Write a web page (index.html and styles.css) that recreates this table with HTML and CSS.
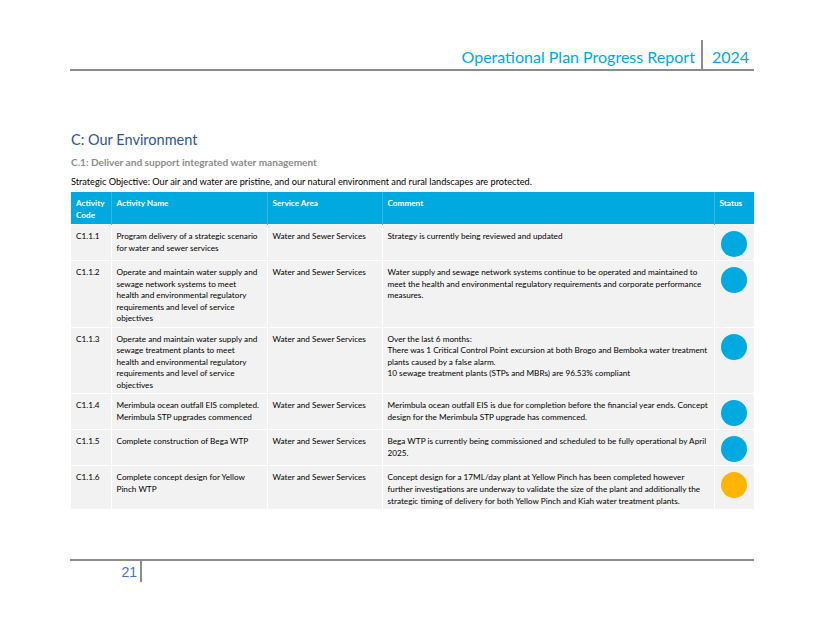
FILE: index.html
```html
<!DOCTYPE html>
<html lang="en">
<head>
<meta charset="utf-8">
<title>Operational Plan Progress Report 2024</title>
<link rel="stylesheet" href="styles.css">
</head>
<body>
<div class="page">
  <header class="top">
    <span class="top-title">Operational Plan Progress Report</span>
    <span class="top-year">2024</span>
  </header>

  <main class="content">
    <h1 class="section">C: Our Environment</h1>
    <h2 class="sub">C.1: Deliver and support integrated water management</h2>
    <p class="objective">Strategic Objective: Our air and water are pristine, and our natural environment and rural landscapes are protected.</p>

    <table class="plan">
      <colgroup>
        <col class="c-code"><col class="c-name"><col class="c-area"><col class="c-comment"><col class="c-status">
      </colgroup>
      <thead>
        <tr>
          <th>Activity Code</th>
          <th>Activity Name</th>
          <th>Service Area</th>
          <th>Comment</th>
          <th>Status</th>
        </tr>
      </thead>
      <tbody>
        <tr>
          <td>C1.1.1</td>
          <td class="name">Program delivery of a strategic scenario for water and sewer services</td>
          <td>Water and Sewer Services</td>
          <td>Strategy is currently being reviewed and updated</td>
          <td class="st"><span class="dot blue"></span></td>
        </tr>
        <tr>
          <td>C1.1.2</td>
          <td class="name">Operate and maintain water supply and sewage network systems to meet health and environmental regulatory requirements and level of service objectives</td>
          <td>Water and Sewer Services</td>
          <td>Water supply and sewage network systems continue to be operated and maintained to meet the health and environmental regulatory requirements and corporate performance measures.</td>
          <td class="st"><span class="dot blue"></span></td>
        </tr>
        <tr>
          <td>C1.1.3</td>
          <td class="name">Operate and maintain water supply and sewage treatment plants to meet health and environmental regulatory requirements and level of service objectives</td>
          <td>Water and Sewer Services</td>
          <td>Over the last 6 months:<br>There was 1 Critical Control Point excursion at both Brogo and Bemboka water treatment plants caused by a false alarm.<br>10 sewage treatment plants (STPs and MBRs) are 96.53% compliant</td>
          <td class="st"><span class="dot blue"></span></td>
        </tr>
        <tr>
          <td>C1.1.4</td>
          <td class="name">Merimbula ocean outfall EIS completed. Merimbula STP upgrades commenced</td>
          <td>Water and Sewer Services</td>
          <td>Merimbula ocean outfall EIS is due for completion before the financial year ends. Concept design for the Merimbula STP upgrade has commenced.</td>
          <td class="st"><span class="dot blue"></span></td>
        </tr>
        <tr>
          <td>C1.1.5</td>
          <td class="name">Complete construction of Bega WTP</td>
          <td>Water and Sewer Services</td>
          <td>Bega WTP is currently being commissioned and scheduled to be fully operational by April 2025.</td>
          <td class="st"><span class="dot blue"></span></td>
        </tr>
        <tr>
          <td>C1.1.6</td>
          <td class="name">Complete concept design for Yellow Pinch WTP</td>
          <td>Water and Sewer Services</td>
          <td>Concept design for a 17ML/day plant at Yellow Pinch has been completed however further investigations are underway to validate the size of the plant and additionally the strategic timing of delivery for both Yellow Pinch and Kiah water treatment plants.</td>
          <td class="st"><span class="dot amber"></span></td>
        </tr>
      </tbody>
    </table>
  </main>

  <footer class="bottom">
    <span class="page-num">21</span>
  </footer>
</div>
</body>
</html>
```

FILE: styles.css
```css
html, body {
  margin: 0;
  padding: 0;
  background: #ffffff;
}

body {
  font-family: Lato, "Open Sans", "Liberation Sans", sans-serif;
  color: #000;
}

.page {
  width: 825px;
  height: 637px;
  display: flex;
  flex-direction: column;
}

/* Header */
.top {
  margin: 40px 0 0 70px;
  width: 684px;
  height: 29px;
  display: flex;
  justify-content: flex-end;
  align-items: stretch;
  border-bottom: 2px solid #8c8c8c;
}

.top-title,
.top-year {
  display: flex;
  align-items: center;
  color: #00a9e0;
  font-size: 16px;
  padding-top: 3px;
}

.top-title {
  padding-right: 6px;
}

.top-year {
  border-left: 2px solid #8c8c8c;
  padding-left: 9px;
  padding-right: 5px;
}

/* Content */
.content {
  margin-left: 71px;
  width: 683px;
}

.section {
  margin: 60px 0 0 0;
  font-size: 14.5px;
  line-height: 18px;
  font-weight: 400;
  color: #2f5597;
}

.sub {
  margin: 7px 0 0 0;
  font-size: 10.1px;
  line-height: 12px;
  font-weight: 700;
  color: #8c8c8c;
}

.objective {
  margin: 8px 0 0 0;
  font-size: 9.2px;
  line-height: 12px;
}

/* Table */
.plan {
  margin-top: 4px;
  width: 683px;
  border-collapse: collapse;
  table-layout: fixed;
  font-size: 8.2px;
  line-height: 11.55px;
}

.c-code { width: 40px; }
.c-name { width: 156px; }
.c-area { width: 115px; }
.c-comment { width: 332px; }
.c-status { width: 40px; }

.plan th {
  background: #00a9e0;
  color: #ffffff;
  font-weight: 700;
  text-align: left;
  vertical-align: top;
  padding: 6px 4px 2px 5px;
  height: 24px;
  border-left: 1px solid #2fb9e6;
}

.plan th:first-child {
  border-left: none;
}

.plan td {
  background: #f2f2f2;
  vertical-align: top;
  padding: 6px 5px 2px 5px;
  border-left: 1px solid #ffffff;
  border-top: 1px solid #ffffff;
}

.plan td.name {
  padding-right: 7.5px;
}

.plan td:first-child {
  border-left: none;
}

.plan td.st {
  padding: 6px 0 0 0;
  text-align: center;
}

.dot {
  display: inline-block;
  width: 26px;
  height: 26px;
  border-radius: 50%;
  margin-bottom: 3px;
  vertical-align: top;
}

.dot.blue { background: #00a9e0; }
.dot.amber { background: #ffb400; }

/* Footer */
.bottom {
  margin: auto 0 55px 70px;
  width: 684px;
  border-top: 2px solid #8c8c8c;
  display: flex;
}

.page-num {
  width: 67px;
  height: 21px;
  text-align: right;
  font-family: "Liberation Sans", Arial, sans-serif;
  font-size: 14px;
  line-height: 22px;
  color: #4472c4;
  padding-right: 3px;
  border-right: 2px solid #8c8c8c;
}
```
